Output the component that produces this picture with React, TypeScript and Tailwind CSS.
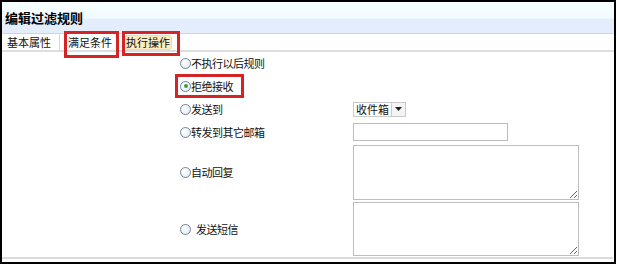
import React from "react";

const font = { fontFamily: '"Noto Sans CJK SC", "Noto Sans", sans-serif' };

function Radio({ checked = false }: { checked?: boolean }) {
  return (
    <span className="inline-flex h-[11px] w-[11px] shrink-0 items-center justify-center rounded-full border border-[#6f84a0] bg-[radial-gradient(circle_at_35%_35%,#ffffff_0%,#eef2f7_60%,#d5dde8_100%)]">
      {checked && <span className="h-[4px] w-[4px] rounded-full bg-[#3aa13a]" />}
    </span>
  );
}

function Label({ children, gap = false }: { children: React.ReactNode; gap?: boolean }) {
  return (
    <span className={`text-[11px] leading-none tracking-[-0.5px] text-[#111] ${gap ? "ml-[5px]" : "ml-[0px]"}`}>
      {children}
    </span>
  );
}

export default function App() {
  return (
    <div className="relative h-[265px] w-[617px] bg-white" style={font}>
      <div className="flex h-[264px] w-[616px] flex-col overflow-hidden border-2 border-black bg-white">
        <div className="flex h-[32px] shrink-0 items-center border-b border-[#cdd5de] bg-[linear-gradient(to_bottom,#f7feff_0%,#f1fbff_52%,#e4edfb_56%,#e4edfb_100%)] pl-[3px]">
          <span className="text-[13px] font-bold text-black">编辑过滤规则</span>
        </div>
        <div className="flex h-[18px] shrink-0 items-center border-b-2 border-[#dedede] text-[11px] leading-none text-[#111]">
          <div className="flex h-full w-[58px] items-center border-r border-[#d6d6d6] pl-[5px]">基本属性</div>
          <div className="flex h-full w-[64px] items-center pl-[8px]">满足条件</div>
          <div className="flex h-[15px] items-center rounded-[3px] border border-[#f2dca0] bg-[#fcecc0] px-[1px]">执行操作</div>
        </div>
        <div className="grid grid-cols-[175px_1fr] pl-[176px]">
          <div className="flex h-[23px] items-center pl-[2px]">
            <Radio />
            <Label>不执行以后规则</Label>
          </div>
          <div />
          <div className="flex h-[22px] items-center pl-[2px]">
            <Radio checked />
            <Label>拒绝接收</Label>
          </div>
          <div />
          <div className="flex h-[24px] items-center pl-[2px]">
            <Radio />
            <Label>发送到</Label>
          </div>
          <div className="flex h-[24px] items-center">
            <div className="flex h-[15px] w-[53px] items-center border border-[#c9c9c9] bg-white text-[11px] leading-none text-[#111]">
              <span className="pl-[2px]">收件箱</span>
              <span className="ml-auto flex h-full w-[14px] items-center justify-center border-l border-[#c9c9c9] bg-[#f4f4f4]">
                <svg width="7" height="4" viewBox="0 0 7 4"><path d="M0 0h7L3.5 4z" fill="#222" /></svg>
              </span>
            </div>
          </div>
          <div className="flex h-[22px] items-center pl-[2px]">
            <Radio />
            <Label>转发到其它邮箱</Label>
          </div>
          <div className="flex h-[22px] items-center">
            <div className="h-[18px] w-[155px] border border-[#bdbdbd] bg-white" />
          </div>
          <div className="mt-[2px] flex h-[55px] items-center pl-[2px]">
            <Radio />
            <Label>自动回复</Label>
          </div>
          <div className="mt-[2px] h-[55px]">
            <textarea className="block h-[55px] w-[226px] resize border border-[#bdbdbd] bg-white outline-none" />
          </div>
          <div className="mt-[2px] flex h-[54px] items-center pl-[2px]">
            <Radio />
            <Label gap>发送短信</Label>
          </div>
          <div className="mt-[2px] h-[54px]">
            <textarea className="block h-[54px] w-[226px] resize border border-[#bdbdbd] bg-white outline-none" />
          </div>
        </div>
        <div className="mt-[1px] h-[2px] w-[611px] bg-[#dcdcdc]" />
      </div>
      <div className="absolute left-[64px] top-[31px] h-[27px] w-[55px] border-[3px] border-[#d42426]" />
      <div className="absolute left-[122px] top-[31px] h-[25px] w-[58px] border-[3px] border-[#d42426]" />
      <div className="absolute left-[175px] top-[74px] h-[24px] w-[69px] border-[3px] border-[#d42426]" />
    </div>
  );
}
